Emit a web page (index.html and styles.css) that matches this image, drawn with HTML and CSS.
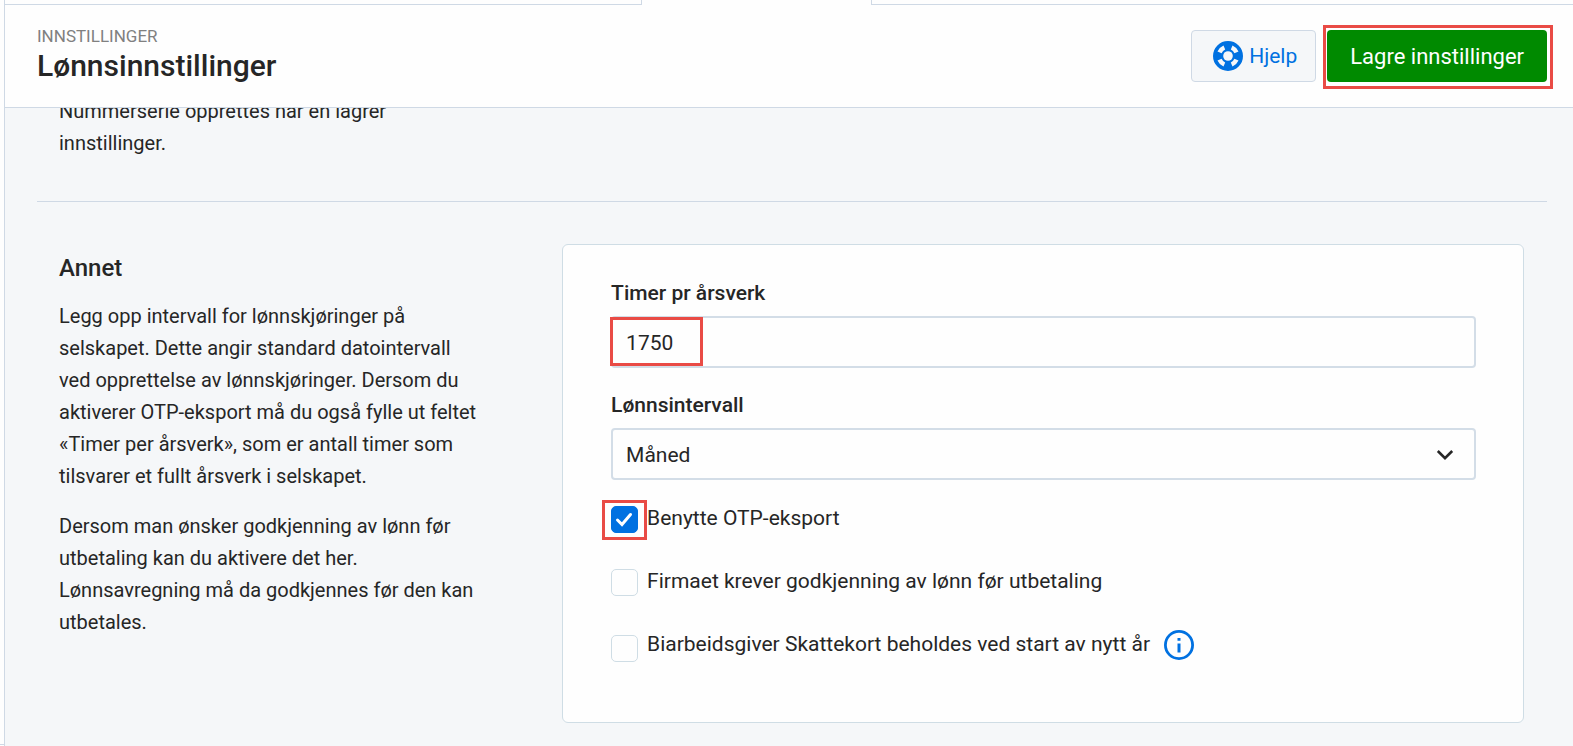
FILE: index.html
```
<!DOCTYPE html>
<html lang="no">
<head>
    <meta charset="UTF-8">
    <meta name="viewport" content="width=device-width, initial-scale=1.0">
    <title>Lønnsinnstillinger</title>
    <link rel="stylesheet" href="styles.css">
</head>
<body>

    <div class="rail"><div class="rail-item"></div></div>

    <div class="page">
        <div class="tabs">
            <div class="tab-before"></div>
            <div class="tab-active"></div>
            <div class="tab-after"></div>
        </div>

        <header class="header">
            <div class="title">
                <span class="crumb">INNSTILLINGER</span>
                <h1>Lønnsinnstillinger</h1>
            </div>
            <div class="actions">
                <button type="button" class="btn btn-help">
                    <svg class="icon-help" viewBox="0 0 30 30" aria-hidden="true">
                        <circle cx="15" cy="15" r="9.5" fill="none" stroke="#0071e1" stroke-width="11"/>
                        <path d="M10.5 4.500A11.600 11.600 0 0 0 4.500 10.500L8.600 12.200A7.200 7.200 0 0 1 12.200 8.600zM19.500 4.500A11.600 11.600 0 0 1 25.500 10.500L21.400 12.200A7.200 7.200 0 0 0 17.800 8.600zM10.500 25.500A11.600 11.600 0 0 1 4.500 19.500L8.600 17.800A7.200 7.200 0 0 0 12.200 21.400zM19.500 25.500A11.600 11.600 0 0 0 25.500 19.500L21.400 17.800A7.200 7.200 0 0 1 17.800 21.400z" fill="#f5f7f9"/>
                        <circle cx="15" cy="15" r="4.8" fill="#f5f7f9"/>
                    </svg>
                    Hjelp
                </button>
                <div class="save">
                    <button type="button" class="btn btn-save">Lagre innstillinger</button>
                    <span class="mark mark-save"></span>
                </div>
            </div>
        </header>

        <main class="content">
            <section class="section section-first">
                <div class="info">
                    <p>Nummerserie opprettes når en lagrer innstillinger.</p>
                </div>
            </section>

            <section class="section">
                <div class="info">
                    <h2>Annet</h2>
                    <p>Legg opp intervall for lønnskjøringer på selskapet. Dette angir standard datointervall ved opprettelse av lønnskjøringer. Dersom du aktiverer OTP-eksport må du også fylle ut feltet «Timer per årsverk», som er antall timer som tilsvarer et fullt årsverk i selskapet.</p>
                    <p>Dersom man ønsker godkjenning av lønn før utbetaling kan du aktivere det her. Lønnsavregning må da godkjennes før den kan utbetales.</p>
                </div>

                <form class="card">
                    <div class="field">
                        <label for="timer">Timer pr årsverk</label>
                        <div class="control">
                            <input type="text" id="timer" value="1750">
                            <span class="mark mark-input"></span>
                        </div>
                    </div>
                    <div class="field">
                        <label for="intervall">Lønnsintervall</label>
                        <div class="control">
                            <select id="intervall">
                                <option>Måned</option>
                            </select>
                            <svg class="icon-arrow" viewBox="0 0 18 12" aria-hidden="true">
                                <path d="M1.8 2l7.2 7.2L16.2 2" fill="none" stroke="#262626" stroke-width="2.6"/>
                            </svg>
                        </div>
                    </div>

                    <div class="checks">
                        <div class="check">
                            <span class="box">
                                <input type="checkbox" id="otp" checked>
                                <svg class="icon-check" viewBox="0 0 27 27" aria-hidden="true">
                                    <path d="M6.5 14l4.5 4.5L19.5 8.500" fill="none" stroke="#fff" stroke-width="3" stroke-linecap="round"/>
                                </svg>
                                <span class="mark mark-check"></span>
                            </span>
                            <label for="otp">Benytte OTP-eksport</label>
                        </div>
                        <div class="check">
                            <span class="box"><input type="checkbox" id="godkjenning"></span>
                            <label for="godkjenning">Firmaet krever godkjenning av lønn før utbetaling</label>
                        </div>
                        <div class="check check-tall">
                            <span class="box"><input type="checkbox" id="skattekort"></span>
                            <label for="skattekort">Biarbeidsgiver Skattekort beholdes ved start av nytt år</label>
                            <svg class="icon-info" viewBox="0 0 30 30" aria-hidden="true">
                                <circle cx="15" cy="15" r="13.6" fill="none" stroke="#0071e1" stroke-width="2.8"/>
                                <path d="M13.5 8h3v2.8h-3zM13.5 13.5h3v9h-3z" fill="#0071e1"/>
                            </svg>
                        </div>
                    </div>
                </form>
            </section>
        </main>
    </div>

</body>
</html>
```
FILE: styles.css
```
* {
    box-sizing: border-box;
}

body {
    display: flex;
    height: 100vh;
    margin: 0;
    overflow: hidden;
    font-family: Roboto, sans-serif;
    font-size: 20px;
    line-height: 32px;
    color: #262626;
    background-color: #fefefe;
}

h1, h2, p {
    margin: 0;
    font-weight: 500;
}

/* left edge and tab strip */
.rail {
    flex: none;
    width: 5px;
    padding-bottom: 1px;
    border-right: 1px solid #cfd9e5;
}

.rail-item {
    height: 100%;
    border-bottom: 1px solid #cfd9e5;
}

.page {
    flex: 1;
    min-width: 0;
    display: flex;
    flex-direction: column;
}

.tabs {
    flex: none;
    display: flex;
    height: 5px;
}

.tab-before {
    flex: 637;
    border-right: 1px solid #cfd9e5;
    border-bottom: 1px solid #cfd9e5;
}

.tab-active {
    flex: 229;
}

.tab-after {
    flex: 702;
    border-left: 1px solid #cfd9e5;
    border-bottom: 1px solid #cfd9e5;
}

/* header */
.header {
    flex: none;
    display: flex;
    justify-content: space-between;
    align-items: flex-start;
    padding: 19px 26px 23px 32px;
    border-bottom: 1px solid #cfd9e5;
}

.title {
    display: flex;
    flex-direction: column;
}

.crumb {
    font-size: 17px;
    line-height: 24px;
    color: #808080;
}

h1 {
    font-size: 30px;
    line-height: 36px;
}

.actions {
    display: flex;
    gap: 11px;
    padding-top: 6px;
}

.btn {
    display: flex;
    align-items: center;
    height: 52px;
    border: none;
    border-radius: 4px;
    font-family: inherit;
    cursor: pointer;
}

.btn-help {
    gap: 6px;
    padding: 0 18px 0 21px;
    border: 1px solid #cfd9e5;
    font-size: 21px;
    color: #0071e1;
    background-color: #f5f7f9;
}

.btn-save {
    padding: 0 23px;
    font-size: 22px;
    color: #fff;
    background-color: #008a00;
}

.icon-help {
    width: 30px;
    height: 30px;
}

.save {
    position: relative;
}

/* red frames */
.mark {
    position: absolute;
    border: 3px solid #e94b45;
    pointer-events: none;
}

.mark-save {
    inset: -5px -6px -7px -4px;
}

.mark-input {
    top: 1px;
    left: -1px;
    width: 93px;
    height: 49px;
}

.mark-check {
    top: -6px;
    left: -9px;
    width: 45px;
    height: 40px;
}

/* content */
.content {
    flex: 1;
    min-height: 0;
    overflow: hidden;
    padding: 0 26px 0 32px;
    background-color: #f5f7f9;
}

.section {
    display: grid;
    grid-template-columns: minmax(0, 523fr) minmax(0, 1000fr);
    padding: 42px 23px 0 22px;
}

/* scrolled partly under the header */
.section-first {
    margin-top: -13px;
    padding-top: 0;
    padding-bottom: 42px;
    border-bottom: 1px solid #cfd9e5;
}

.info {
    padding-right: 82px;
}

.info h2 {
    margin: 8px 0 16px;
    font-size: 24px;
}

.info p {
    font-weight: 400;
}

.info p + p {
    margin-top: 18px;
}

.card {
    padding: 32px 47px 60px 48px;
    border: 1px solid #cfdde5;
    border-radius: 6px;
    font-size: 21px;
    background-color: #fefefe;
}

.field {
    margin-bottom: 21px;
}

.field label {
    display: block;
    margin-bottom: 7px;
    font-weight: 500;
}

.control {
    position: relative;
}

.control input,
.control select {
    display: block;
    width: 100%;
    height: 52px;
    padding: 2px 13px 0;
    border: 2px solid #d3dde7;
    border-radius: 4px;
    font-family: inherit;
    font-size: 21px;
    color: #262626;
    background-color: #fefefe;
    appearance: none;
}

.icon-arrow {
    position: absolute;
    top: 21px;
    right: 22px;
    width: 18px;
    height: 12px;
    pointer-events: none;
}

.checks {
    display: flex;
    flex-direction: column;
    gap: 31px;
}

.check {
    display: flex;
    height: 32px;
    gap: 9px;
}

.check label {
    padding-top: 1px;
}

.check-tall {
    height: 35px;
}

.box {
    position: relative;
    align-self: flex-end;
    width: 27px;
    height: 27px;
}

.box input {
    display: block;
    width: 27px;
    height: 27px;
    margin: 0;
    border: 1px solid #cfdde5;
    border-radius: 5px;
    background-color: #fefefe;
    appearance: none;
}

.box input:checked {
    border-color: #0071e1;
    background-color: #0071e1;
}

.icon-check {
    position: absolute;
    inset: 0;
    pointer-events: none;
}

.icon-info {
    align-self: center;
    width: 30px;
    height: 30px;
    margin-left: 5px;
}
```
